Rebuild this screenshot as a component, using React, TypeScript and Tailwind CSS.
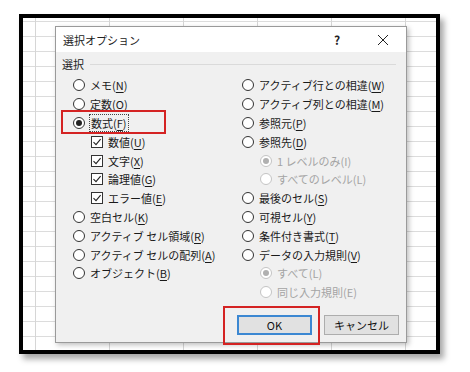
import React from "react";

type Item = { t: string; k: string; checked?: boolean; disabled?: boolean; sub?: "check" | "radio"; focus?: boolean };

const leftItems: Item[] = [
  { t: "メモ", k: "N" },
  { t: "定数", k: "O" },
  { t: "数式", k: "F", checked: true, focus: true },
  { t: "数値", k: "U", sub: "check", checked: true },
  { t: "文字", k: "X", sub: "check", checked: true },
  { t: "論理値", k: "G", sub: "check", checked: true },
  { t: "エラー値", k: "E", sub: "check", checked: true },
  { t: "空白セル", k: "K" },
  { t: "アクティブ セル領域", k: "R" },
  { t: "アクティブ セルの配列", k: "A" },
  { t: "オブジェクト", k: "B" },
];

const rightItems: Item[] = [
  { t: "アクティブ行との相違", k: "W" },
  { t: "アクティブ列との相違", k: "M" },
  { t: "参照元", k: "P" },
  { t: "参照先", k: "D" },
  { t: "1 レベルのみ", k: "I", sub: "radio", checked: true, disabled: true },
  { t: "すべてのレベル", k: "L", sub: "radio", disabled: true },
  { t: "最後のセル", k: "S" },
  { t: "可視セル", k: "Y" },
  { t: "条件付き書式", k: "T" },
  { t: "データの入力規則", k: "V" },
  { t: "すべて", k: "L", sub: "radio", checked: true, disabled: true },
  { t: "同じ入力規則", k: "E", sub: "radio", disabled: true },
];

function Radio({ checked, disabled }: { checked?: boolean; disabled?: boolean }) {
  return (
    <span
      className={`flex items-center justify-center w-[12px] h-[12px] rounded-full border bg-white shrink-0 ${
        disabled ? "border-[#c4c4c4]" : "border-[#333]"
      }`}
    >
      {checked && <span className={`w-[6px] h-[6px] rounded-full ${disabled ? "bg-[#b0b0b0]" : "bg-[#222]"}`} />}
    </span>
  );
}

function Check() {
  return (
    <span className="flex items-center justify-center w-[12px] h-[12px] border border-[#333] bg-white shrink-0">
      <svg width="10" height="10" viewBox="0 0 10 10">
        <path d="M1.5 5.2 L4 7.6 L8.6 2.2" fill="none" stroke="#222" strokeWidth="1.1" />
      </svg>
    </span>
  );
}

function Row({ item }: { item: Item }) {
  const label = (
    <span className={item.focus ? "outline outline-1 outline-dotted outline-[#444] px-[1px]" : ""}>
      {item.t}(
      {item.disabled ? item.k : <span className="underline underline-offset-[2px]">{item.k}</span>})
    </span>
  );
  return (
    <div
      className={`flex items-center h-[18.8px] ${item.sub ? "pl-[18px]" : ""} ${
        item.disabled ? "text-[#a4a4a4]" : "text-[#1a1a1a]"
      }`}
    >
      {item.sub === "check" ? <Check /> : <Radio checked={item.checked} disabled={item.disabled} />}
      <span className="ml-[5px] whitespace-nowrap">{label}</span>
    </div>
  );
}

export default function App() {
  return (
    <div
      className="w-[470px] h-[372px] bg-white pt-[14px] pl-[19px] text-[11px] leading-[16px]"
      style={{ fontFamily: '"Noto Sans CJK JP", "Noto Sans", sans-serif' }}
    >
      <div className="w-[421px] h-[340px] border-4 border-black shadow-[4px_5px_6px_rgba(0,0,0,0.35)] bg-white bg-[linear-gradient(to_right,#d6d6d6_1px,transparent_1px),linear-gradient(to_bottom,#dcdcdc_1px,transparent_1px)] bg-[size:74px_15px] bg-[position:12px_3px] pl-[32px] pt-[8px]">
        <div className="relative w-[352px] h-[317px] flex flex-col border border-[#9a9a9a] shadow-[2px_2px_5px_rgba(0,0,0,0.25)] bg-[#f0f0f0]">
          <div className="h-[25px] bg-white flex items-center pl-[7px] text-[#222]">
            <span className="flex-1">選択オプション</span>
            <span className="w-[20px] text-center font-bold text-[12px] mr-[30px]">?</span>
            <svg width="12" height="12" viewBox="0 0 12 12" className="mr-[17px]">
              <path d="M1 1 L11 11 M11 1 L1 11" stroke="#222" strokeWidth="1" />
            </svg>
          </div>
          <div className="flex-1 flex flex-col px-[6px] pt-[4px]">
            <div className="flex items-center text-[#222]">
              <span>選択</span>
              <span className="flex-1 h-px bg-[#dadada] ml-[6px] mr-[4px]" />
            </div>
            <div className="flex mt-[4px] pl-[11px]">
              <div className="w-[169px] flex flex-col">
                {leftItems.map((it, i) => (
                  <Row key={i} item={it} />
                ))}
              </div>
              <div className="flex flex-col">
                {rightItems.map((it, i) => (
                  <Row key={i} item={it} />
                ))}
              </div>
            </div>
            <div className="mt-auto flex justify-end gap-[12px] pr-[1px] pb-[7px]">
              <button className="w-[75px] h-[20px] bg-[#e1e1e1] border-2 border-[#3c88d2] text-[#111] flex items-center justify-center">
                OK
              </button>
              <button className="w-[75px] h-[20px] bg-[#e1e1e1] border border-[#adadad] text-[#111] flex items-center justify-center">
                キャンセル
              </button>
            </div>
          </div>
          <div className="absolute left-[5px] top-[83px] w-[105px] h-[24px] border-2 border-[#d42323]" />
          <div className="absolute left-[167px] top-[279px] w-[97px] h-[39px] border-2 border-[#d42323]" />
        </div>
      </div>
    </div>
  );
}
